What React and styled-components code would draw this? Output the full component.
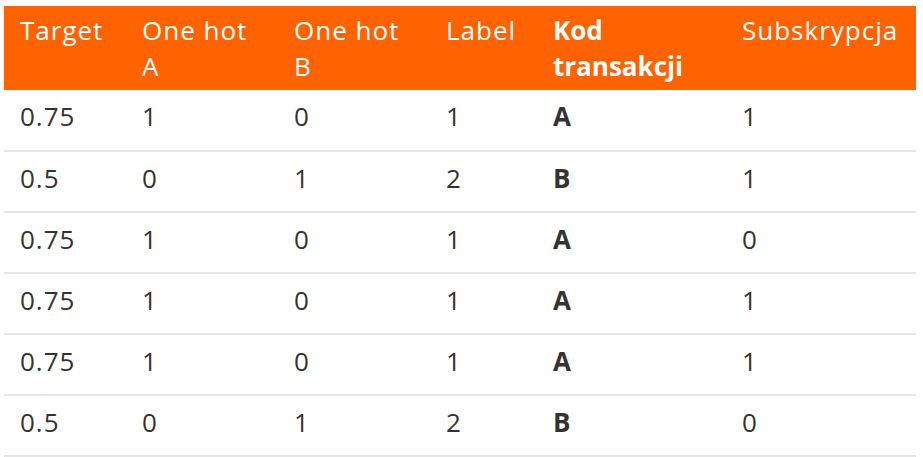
import React from 'react'
import styled, { createGlobalStyle } from 'styled-components'

const GlobalStyle = createGlobalStyle`
  html, body {
    margin: 0;
    padding: 0;
    background: #ffffff;
  }
  body {
    font-family: "Open Sans", Lato, sans-serif;
  }
`;

const Page = styled.div`
  padding: 6px 7px 0 4px;
`;

const Table = styled.table`
  width: 912px;
  border-collapse: collapse;
  table-layout: fixed;
  font-size: 26px;
  color: #333333;
`;

const HeadRow = styled.tr`
  background-color: #ff6200;
`;

const Th = styled.th`
  text-align: left;
  vertical-align: top;
  font-weight: ${({ $bold }) => ($bold ? 700 : 400)};
  letter-spacing: ${({ $bold }) => ($bold ? '0' : '1px')};
  color: #ffffff;
  line-height: 36px;
  padding: 6px 16px 6px 16px;
`;

const Row = styled.tr`
  border-bottom: 2px solid #e6e6e6;
`;

const Td = styled.td`
  height: 61px;
  box-sizing: border-box;
  padding: 8px 16px 0 16px;
  line-height: 36px;
  vertical-align: top;
  font-weight: ${({ $bold }) => ($bold ? 700 : 400)};
  letter-spacing: ${({ $bold }) => ($bold ? '0' : '1px')};
`;

const columns = [
  { key: 'target', label: 'Target', width: 122 },
  { key: 'a', label: 'One hot A', width: 152 },
  { key: 'b', label: 'One hot B', width: 152 },
  { key: 'label', label: 'Label', width: 107 },
  { key: 'code', label: 'Kod transakcji', width: 189, bold: true },
  { key: 'sub', label: 'Subskrypcja', width: 190 },
];

const rows = [
  ['0.75', '1', '0', '1', 'A', '1'],
  ['0.5', '0', '1', '2', 'B', '1'],
  ['0.75', '1', '0', '1', 'A', '0'],
  ['0.75', '1', '0', '1', 'A', '1'],
  ['0.75', '1', '0', '1', 'A', '1'],
  ['0.5', '0', '1', '2', 'B', '0'],
];

export default function App() {
  return (
    <>
      <GlobalStyle />
      <Page>
        <Table>
          <colgroup>
            {columns.map((c) => (
              <col key={c.key} style={{ width: c.width }} />
            ))}
          </colgroup>
          <thead>
            <HeadRow>
              {columns.map((c) => (
                <Th key={c.key} $bold={c.bold}>{c.label}</Th>
              ))}
            </HeadRow>
          </thead>
          <tbody>
            {rows.map((r, i) => (
              <Row key={i}>
                {r.map((v, j) => (
                  <Td key={j} $bold={columns[j].bold}>{v}</Td>
                ))}
              </Row>
            ))}
          </tbody>
        </Table>
      </Page>
    </>
  )
}
